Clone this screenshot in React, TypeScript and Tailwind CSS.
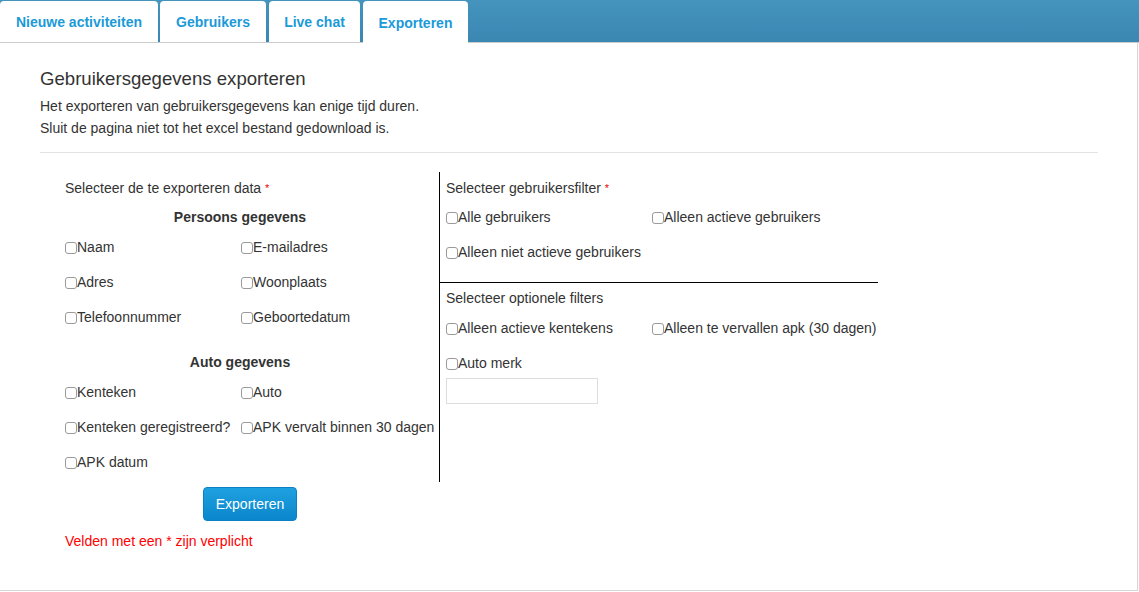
import React from "react";

const TABS = ["Nieuwe activiteiten", "Gebruikers", "Live chat", "Exporteren"];
const TAB_WIDTHS = ["w-[158px]", "w-[106px]", "w-[91px]", "w-[105px]"];

function Check({ label }: { label: string }) {
  return (
    <label className="flex items-center h-5 whitespace-nowrap">
      <input
        type="checkbox"
        className="appearance-none w-[12px] h-[12px] mt-[1px] border border-[#9a9a9a] rounded-[3px] bg-white"
      />
      <span>{label}</span>
    </label>
  );
}

function CheckGrid({ items, col }: { items: string[]; col: string }) {
  return (
    <div className={`grid ${col} gap-y-[15px]`}>
      {items.map((i) => (
        <Check key={i} label={i} />
      ))}
    </div>
  );
}

export default function App() {
  return (
    <div
      className="w-[1139px] h-[592px] bg-white text-[14px] text-[#333] flex flex-col"
      style={{ fontFamily: '"Liberation Sans", Arial, sans-serif' }}
    >
      <div className="h-[43px] bg-gradient-to-b from-[#4494be] to-[#3a87b2] flex items-end gap-[2px] border-b border-[#cccccc] shrink-0">
        {TABS.map((t, i) => (
          <div
            key={t}
            className={`${TAB_WIDTHS[i]} h-[41px] bg-white rounded-t-[4px] flex items-center justify-center font-bold text-[#1b9ad8] ${
              i === 3 ? "-mb-px h-[42px] ml-[1px] pt-[2px]" : "pt-[2px]"
            } ${i === 2 ? "ml-[1px]" : ""}`}
          >
            {t}
          </div>
        ))}
      </div>
      <div className="flex-1 border-r border-b border-[#d6d6d6] mr-[1px] mb-[1px] px-10 pt-[24px]">
        <h2 className="text-[18.6px] leading-6 text-[#333]">Gebruikersgegevens exporteren</h2>
        <p className="mt-[4px] leading-[22px]">
          Het exporteren van gebruikersgegevens kan enige tijd duren.
          <br />
          Sluit de pagina niet tot het excel bestand gedownload is.
        </p>
        <div className="mt-[13px] border-t border-[#e3e3e3] w-[1058px]" />
        <div className="flex mt-[19px]">
          <div className="w-[400px] pl-[25px] border-r border-black h-[310px] pt-[6px]">
            <div className="leading-5">
              Selecteer de te exporteren data <span className="text-[#e00] text-[11px] align-top">*</span>
            </div>
            <div className="font-bold text-center w-[350px] mt-[9px] leading-5">Persoons gegevens</div>
            <div className="mt-[10px]">
              <CheckGrid col="grid-cols-[176px_1fr]" items={["Naam", "E-mailadres", "Adres", "Woonplaats", "Telefoonnummer", "Geboortedatum"]} />
            </div>
            <div className="font-bold text-center w-[350px] mt-[25px] leading-5">Auto gegevens</div>
            <div className="mt-[10px]">
              <CheckGrid
                col="grid-cols-[176px_1fr]"
                items={["Kenteken", "Auto", "Kenteken geregistreerd?", "APK vervalt binnen 30 dagen", "APK datum"]}
              />
            </div>
          </div>
          <div className="w-[438px] pt-[6px]">
            <div className="pl-[6px] h-[104px]">
              <div className="leading-5">
                Selecteer gebruikersfilter <span className="text-[#e00] text-[11px] align-top">*</span>
              </div>
              <div className="mt-[9px]">
                <CheckGrid col="grid-cols-[206px_1fr]" items={["Alle gebruikers", "Alleen actieve gebruikers", "Alleen niet actieve gebruikers"]} />
              </div>
            </div>
            <div className="border-t border-black pl-[6px] pt-[5px]">
              <div className="leading-5">Selecteer optionele filters</div>
              <div className="mt-[10px]">
                <CheckGrid col="grid-cols-[206px_1fr]" items={["Alleen actieve kentekens", "Alleen te vervallen apk (30 dagen)", "Auto merk"]} />
              </div>
              <input type="text" className="mt-[5px] w-[152px] h-[26px] border border-[#dddddd] outline-none" />
            </div>
          </div>
        </div>
        <div className="pl-[163px] mt-[5px]">
          <button className="w-[94px] h-[34px] rounded-[4px] bg-gradient-to-b from-[#1ea1e0] to-[#0a86cc] border border-[#0b80c4] text-white text-[14px]">
            Exporteren
          </button>
        </div>
        <div className="pl-[25px] mt-[10px] text-[#ff0000] leading-5">Velden met een * zijn verplicht</div>
      </div>
    </div>
  );
}
